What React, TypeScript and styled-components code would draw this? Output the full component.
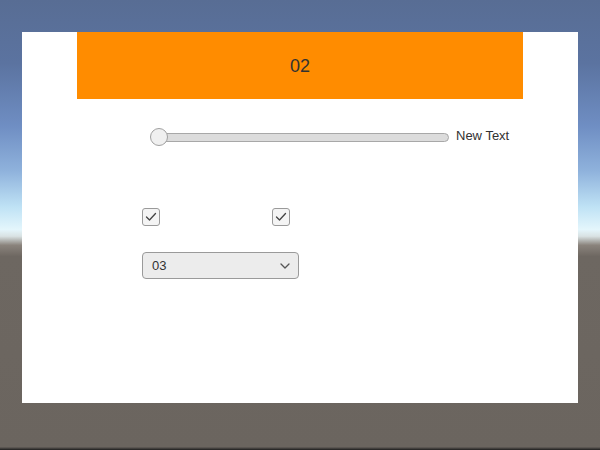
import { createGlobalStyle, styled } from "styled-components";

const GlobalStyle = createGlobalStyle`
  html, body {
    margin: 0;
    padding: 0;
  }
  body {
    font-family: "Liberation Sans", Arial, sans-serif;
  }
`;

const App = () => {
  return (
    <Scene>
      <GlobalStyle />
      <Panel>
        <Header>02</Header>
        <Content>
          <SliderRow>
            <Slider>
              <Track />
              <Handle />
            </Slider>
            <Label>New Text</Label>
          </SliderRow>
          <ToggleRow>
            <Checkbox>
              <CheckIcon />
            </Checkbox>
            <Checkbox>
              <CheckIcon />
            </Checkbox>
          </ToggleRow>
          <Dropdown>
            <span>03</span>
            <Chevron />
          </Dropdown>
        </Content>
      </Panel>
    </Scene>
  );
};

const CheckIcon = () => (
  <svg width="12" height="10" viewBox="0 0 12 10">
    <polyline
      points="1.5,5 4.5,8 10.5,1.5"
      fill="none"
      stroke="#444"
      strokeWidth="1.3"
      strokeLinecap="round"
      strokeLinejoin="round"
    />
  </svg>
);

const Chevron = () => (
  <svg width="10" height="6" viewBox="0 0 10 6">
    <polyline
      points="1,1 5,5 9,1"
      fill="none"
      stroke="#555"
      strokeWidth="1.3"
      strokeLinecap="round"
      strokeLinejoin="round"
    />
  </svg>
);

const Scene = styled.div`
  width: 600px;
  height: 450px;
  box-sizing: border-box;
  padding: 32px 22px 0 22px;
  background: linear-gradient(
    to bottom,
    #586d94 0%,
    #5b73a0 14%,
    #6f8ec3 28%,
    #8fb2dc 38%,
    #bfe2f5 46%,
    #e4f6fc 51%,
    #d9e2e3 52.5%,
    #8a837c 54.5%,
    #6d6761 57%,
    #6b655f 99.3%,
    #1e1e1e 100%
  );
`;

const Panel = styled.div`
  width: 556px;
  height: 371px;
  background: #ffffff;
  display: flex;
  flex-direction: column;
  align-items: center;
`;

const Header = styled.div`
  width: 446px;
  height: 67px;
  box-sizing: border-box;
  padding-top: 2px;
  background: #ff8c00;
  display: flex;
  align-items: center;
  justify-content: center;
  font-size: 18px;
  color: #323232;
`;

const Content = styled.div`
  align-self: stretch;
  padding-left: 120px;
  display: flex;
  flex-direction: column;
`;

const SliderRow = styled.div`
  display: flex;
  align-items: center;
  margin-top: 29px;
  padding-left: 8px;
  height: 18px;
`;

const Slider = styled.div`
  position: relative;
  width: 299px;
  height: 18px;
  display: flex;
  align-items: center;
`;

const Track = styled.div`
  flex: 1;
  height: 7px;
  margin-left: 2px;
  border: 1px solid #a8a8a8;
  border-radius: 5px;
  background: #dcdcdc;
`;

const Handle = styled.div`
  position: absolute;
  left: 0;
  top: 0;
  width: 16px;
  height: 16px;
  border: 1px solid #a0a0a0;
  border-radius: 50%;
  background: #f0f0f0;
`;

const Label = styled.span`
  margin-left: 7px;
  margin-bottom: 3px;
  font-size: 13px;
  color: #323232;
`;

const ToggleRow = styled.div`
  display: flex;
  gap: 112px;
  margin-top: 62px;
`;

const Checkbox = styled.div`
  width: 16px;
  height: 16px;
  border: 1px solid #9a9a9a;
  border-radius: 3px;
  background: #f4f4f4;
  display: flex;
  align-items: center;
  justify-content: center;
`;

const Dropdown = styled.div`
  margin-top: 26px;
  width: 157px;
  height: 27px;
  box-sizing: border-box;
  border: 1px solid #9a9a9a;
  border-radius: 4px;
  background: #ececec;
  display: flex;
  align-items: center;
  justify-content: space-between;
  padding: 0 8px 0 9px;
  font-size: 13px;
  color: #323232;
`;

export default App;
